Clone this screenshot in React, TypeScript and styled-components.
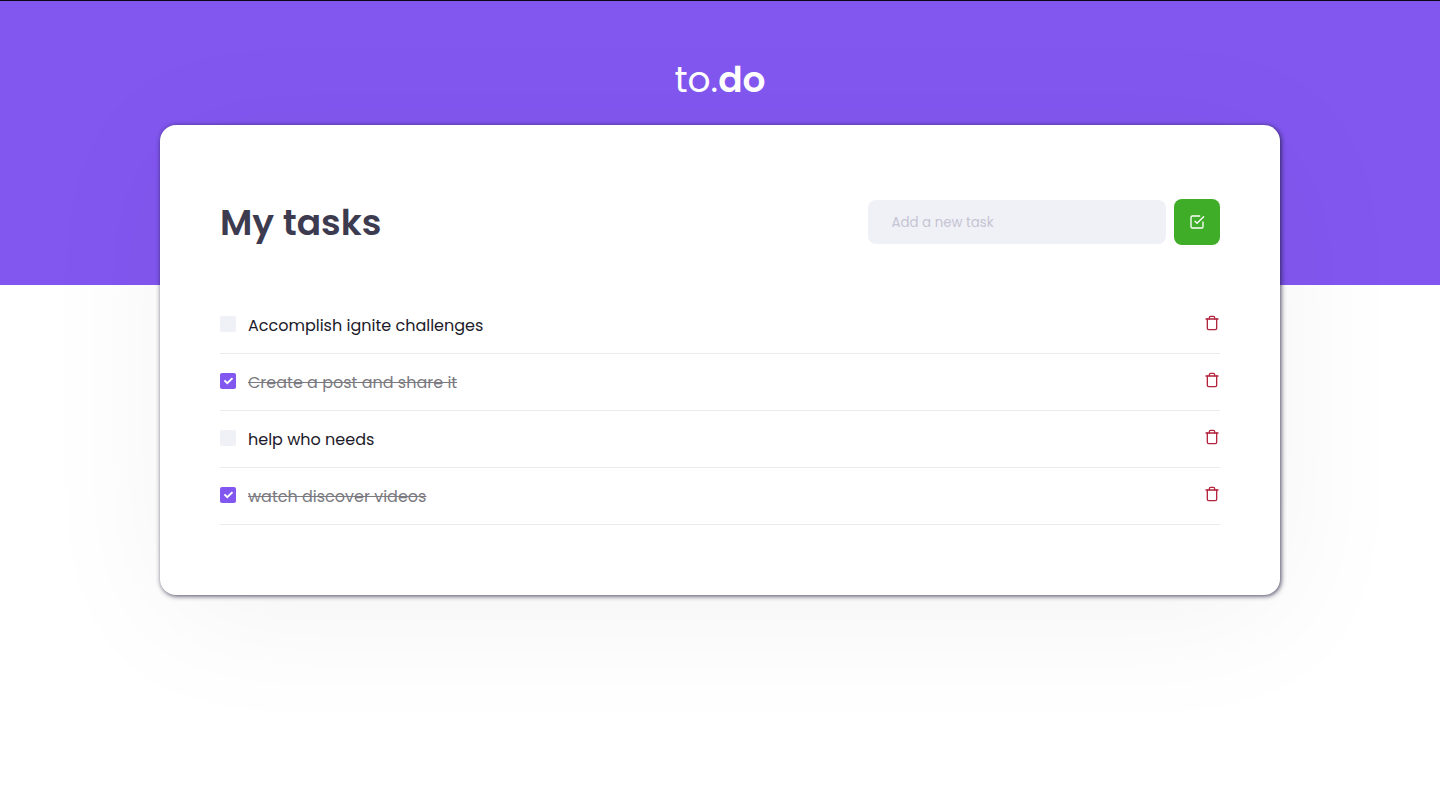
import React, { useState } from "react";
import styled, { createGlobalStyle } from "styled-components";
import { FiCheckSquare, FiTrash } from "react-icons/fi";

const GlobalStyle = createGlobalStyle`
  * { margin: 0; padding: 0; box-sizing: border-box; }
  body { background: #fff; }
  body, input, button { font-family: Poppins, Inter, sans-serif; }
`;

const Page = styled.div`
  min-height: 100vh;
`;

const Header = styled.header`
  height: 285px;
  border-top: 1px solid #0a0613;
  background: #8257f0;
  padding-top: 55px;
`;

const Logo = styled.div`
  height: 48px;
  line-height: 48px;
  font-size: 36px;
  text-align: center;
  color: #fff;
`;

const LogoBold = styled.span`
  font-weight: 600;
`;

const Card = styled.main`
  position: relative;
  width: 1120px;
  height: 470px;
  margin: -160px auto 0;
  padding: 74px 60px 0;
  border-radius: 16px;
  background: #fff;
  box-shadow: 1px 1px 5px rgba(25, 20, 50, 0.8), 3px 20px 140px rgba(0, 0, 0, 0.05);
`;

const CardHeader = styled.div`
  display: flex;
  align-items: center;
  justify-content: space-between;
  height: 46px;
`;

const Title = styled.h2`
  padding-top: 1px;
  font-size: 36px;
  line-height: 46px;
  font-weight: 600;
  color: #3d3b4f;
`;

const Form = styled.div`
  display: flex;
  align-items: center;
  gap: 8px;
`;

const Input = styled.input`
  width: 298px;
  height: 44px;
  padding: 2px 24px 0 23.5px;
  border: 0;
  border-radius: 8px;
  background: #f0f1f6;
  font-size: 13.333px;
  color: #3d3b4f;
  &::placeholder { color: #c5c4d3; }
`;

const AddButton = styled.button`
  display: grid;
  place-items: center;
  width: 46px;
  height: 46px;
  border: 0;
  border-radius: 8px;
  background: #3fad27;
  color: #fff;
`;

const List = styled.ul`
  list-style: none;
  margin-top: 52px;
`;

const Item = styled.li`
  display: flex;
  align-items: center;
  justify-content: space-between;
  height: 57px;
  border-bottom: 1px solid #ebebeb;
`;

const Task = styled.label`
  display: flex;
  align-items: center;
  gap: 12px;
`;

const Check = styled.span<{ $done: boolean }>`
  display: grid;
  place-items: center;
  width: 16px;
  height: 16px;
  margin-bottom: 2px;
  border-radius: 2px;
  background: ${(p) => (p.$done ? "#8257f0" : "#f0f1f6")};
`;

const HiddenBox = styled.input`
  display: none;
`;

const Text = styled.span<{ $done: boolean }>`
  margin: 1px 0 -1px;
  font-size: 16px;
  line-height: 24px;
  color: ${(p) => (p.$done ? "#7b7a81" : "#1c1a29")};
  text-decoration: ${(p) => (p.$done ? "line-through" : "none")};
`;

const Remove = styled.button`
  display: flex;
  border: 0;
  margin-bottom: 4px;
  background: transparent;
  color: #b3243f;
`;

const initial = [
  { id: 1, title: "Accomplish ignite challenges", done: false },
  { id: 2, title: "Create a post and share it", done: true },
  { id: 3, title: "help who needs", done: false },
  { id: 4, title: "watch discover videos", done: true },
];

export default function App() {
  const [tasks, setTasks] = useState(initial);
  const [title, setTitle] = useState("");

  const toggle = (id: number) =>
    setTasks(tasks.map((t) => (t.id === id ? { ...t, done: !t.done } : t)));
  const remove = (id: number) => setTasks(tasks.filter((t) => t.id !== id));
  const add = () => {
    if (!title) return;
    setTasks([...tasks, { id: Date.now(), title, done: false }]);
    setTitle("");
  };

  return (
    <Page>
      <GlobalStyle />
      <Header>
        <Logo>
          to.<LogoBold>do</LogoBold>
        </Logo>
      </Header>
      <Card>
        <CardHeader>
          <Title>My tasks</Title>
          <Form>
            <Input
              placeholder="Add a new task"
              value={title}
              onChange={(e) => setTitle(e.target.value)}
            />
            <AddButton onClick={add}>
              <FiCheckSquare size={16} />
            </AddButton>
          </Form>
        </CardHeader>
        <List>
          {tasks.map((t) => (
            <Item key={t.id}>
              <Task>
                <HiddenBox type="checkbox" checked={t.done} onChange={() => toggle(t.id)} />
                <Check $done={t.done}>
                  {t.done && (
                    <svg width="16" height="16" viewBox="0 0 16 16" fill="none">
                      <path d="M4.4 7.4 7.3 10.2 12.5 5.1" stroke="#fff" strokeWidth="2" />
                    </svg>
                  )}
                </Check>
                <Text $done={t.done}>{t.title}</Text>
              </Task>
              <Remove onClick={() => remove(t.id)}>
                <FiTrash size={16} />
              </Remove>
            </Item>
          ))}
        </List>
      </Card>
    </Page>
  );
}
